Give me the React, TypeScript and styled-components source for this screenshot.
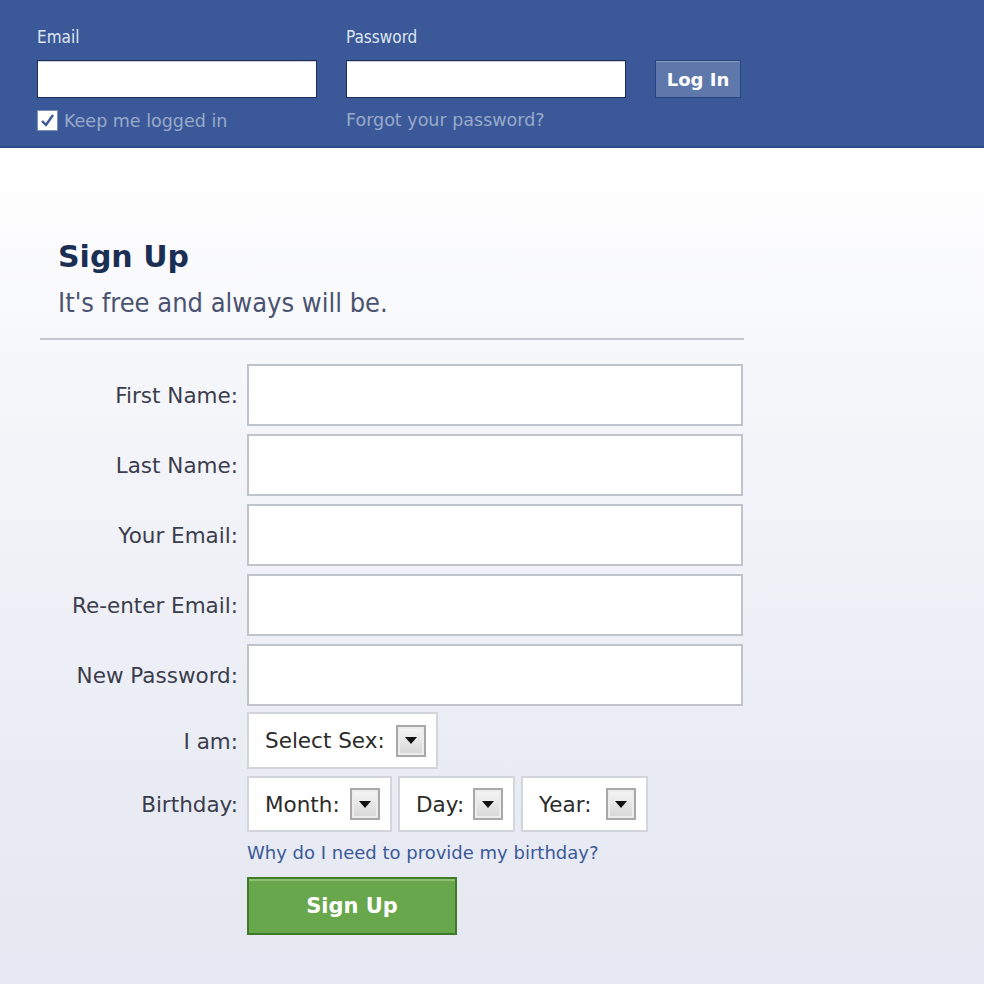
import React from 'react'
import styled, { createGlobalStyle } from 'styled-components'

const GlobalStyle = createGlobalStyle`
  html, body {
    margin: 0;
    padding: 0;
  }
  body {
    font-family: "DejaVu Sans", Verdana, sans-serif;
    background: linear-gradient(180deg, #ffffff 150px, #f3f4f9 450px, #e4e7f1 984px);
    min-height: 984px;
  }
`

const Page = styled.div`
  width: 984px;
  min-height: 984px;
`

const Header = styled.div`
  height: 148px;
  background: #3b5998;
  border-bottom: 2px solid #2e4a86;
  box-sizing: border-box;
  padding: 24px 0 0 37px;
  display: flex;
  gap: 29px;
`

const LoginCol = styled.div`
  display: flex;
  flex-direction: column;
  width: 280px;
`

const LoginLabel = styled.label`
  color: #dfe5f2;
  font-size: 17px;
  line-height: 26px;
  height: 36px;
  font-family: "DejaVu Sans Condensed", "DejaVu Sans", sans-serif;
`

const LoginInput = styled.div`
  height: 38px;
  background: #fff;
  border: 1px solid #1d2f59;
  box-sizing: border-box;
  box-shadow: inset 0 1px 0 #c9cfdb;
`

const SubLine = styled.div`
  display: flex;
  align-items: center;
  gap: 6px;
  margin-top: 12px;
  color: #98a9ca;
  font-size: 17.5px;
  white-space: nowrap;
`

const Check = styled.span`
  width: 21px;
  height: 21px;
  flex: none;
  background: #fff;
  border: 1px solid #7b8fb8;
  box-sizing: border-box;
  display: flex;
  align-items: center;
  justify-content: center;
`

const LoginButton = styled.div`
  margin-top: 36px;
  height: 38px;
  width: 86px;
  box-sizing: border-box;
  background: #5f78ab;
  border: 1px solid #29447e;
  box-shadow: inset 0 1px 0 #8a9cc2;
  color: #fff;
  font-weight: bold;
  font-size: 18px;
  display: flex;
  align-items: center;
  justify-content: center;
`

const Main = styled.div`
  width: 704px;
  margin-left: 40px;
  padding-top: 89px;
`

const Title = styled.h1`
  margin: 0 0 0 18px;
  font-size: 30px;
  line-height: 40px;
  font-weight: bold;
  color: #1b2f55;
`

const Subtitle = styled.div`
  margin: 9px 0 0 18px;
  font-size: 27px;
  line-height: 34px;
  color: #4a5370;
  font-family: "DejaVu Sans Condensed", "DejaVu Sans", sans-serif;
`

const Divider = styled.hr`
  margin: 18px 0 24px 0;
  border: 0;
  height: 2px;
  background: #c4c7d0;
`

const Form = styled.div`
  display: grid;
  grid-template-columns: 198px 496px;
  column-gap: 9px;
  row-gap: 8px;
  align-items: center;
`

const Label = styled.div`
  text-align: right;
  font-size: 21.5px;
  color: #3b3d4d;
  white-space: nowrap;
`

const TextBox = styled.div`
  height: 62px;
  background: #fff;
  border: 2px solid #bfc3cc;
  box-sizing: border-box;
`

const SelectGroup = styled.div<{ $top?: number }>`
  display: flex;
  gap: 6px;
  margin-top: ${p => p.$top ?? 0}px;
`

const Select = styled.div<{ $w: number; $h: number }>`
  width: ${p => p.$w}px;
  height: ${p => p.$h}px;
  background: #fff;
  border: 2px solid #d2d5dc;
  box-sizing: border-box;
  display: flex;
  align-items: center;
  padding: 0 10px 0 16px;
  gap: 8px;
  justify-content: space-between;
  font-size: 21.5px;
  color: #2b2b2b;
  white-space: nowrap;
`

const Arrow = styled.span`
  width: 30px;
  height: 32px;
  flex: none;
  box-sizing: border-box;
  border: 2px solid #a8a8a8;
  box-shadow: inset 0 0 0 2px #ececec;
  background: linear-gradient(180deg, #f6f6f6, #d6d6d6);
  display: flex;
  align-items: center;
  justify-content: center;
  &::after {
    content: '';
    border-left: 6px solid transparent;
    border-right: 6px solid transparent;
    border-top: 7px solid #111;
  }
`

const Help = styled.div`
  grid-column: 2;
  color: #3b5998;
  font-size: 18px;
  margin-top: 2px;
  white-space: nowrap;
`

const SignUpButton = styled.div`
  grid-column: 2;
  margin-top: 6px;
  width: 210px;
  height: 58px;
  box-sizing: border-box;
  background: #68a74b;
  border: 2px solid #3f7a2a;
  box-shadow: inset 0 2px 0 #8cc06f;
  color: #fff;
  font-weight: bold;
  font-size: 21px;
  display: flex;
  align-items: center;
  justify-content: center;
`

const fields = ['First Name:', 'Last Name:', 'Your Email:', 'Re-enter Email:', 'New Password:']

export default function App() {
  return (
    <Page>
      <GlobalStyle />
      <Header>
        <LoginCol>
          <LoginLabel>Email</LoginLabel>
          <LoginInput />
          <SubLine>
            <Check>
              <svg width="15" height="15" viewBox="0 0 15 15">
                <path d="M2 8 L6 12 L13 2" fill="none" stroke="#3b5998" strokeWidth="2.4" />
              </svg>
            </Check>
            Keep me logged in
          </SubLine>
        </LoginCol>
        <LoginCol>
          <LoginLabel>Password</LoginLabel>
          <LoginInput />
          <SubLine>Forgot your password?</SubLine>
        </LoginCol>
        <LoginButton>Log In</LoginButton>
      </Header>
      <Main>
        <Title>Sign Up</Title>
        <Subtitle>It's free and always will be.</Subtitle>
        <Divider />
        <Form>
          {fields.map(f => (
            <React.Fragment key={f}>
              <Label>{f}</Label>
              <TextBox />
            </React.Fragment>
          ))}
          <Label>I am:</Label>
          <SelectGroup $top={-2}>
            <Select $w={191} $h={57}>Select Sex:<Arrow /></Select>
          </SelectGroup>
          <Label>Birthday:</Label>
          <SelectGroup $top={-1}>
            <Select $w={145} $h={56}>Month:<Arrow /></Select>
            <Select $w={117} $h={56}>Day:<Arrow /></Select>
            <Select $w={127} $h={56}>Year:<Arrow /></Select>
          </SelectGroup>
          <Help>Why do I need to provide my birthday?</Help>
          <SignUpButton>Sign Up</SignUpButton>
        </Form>
      </Main>
    </Page>
  )
}
